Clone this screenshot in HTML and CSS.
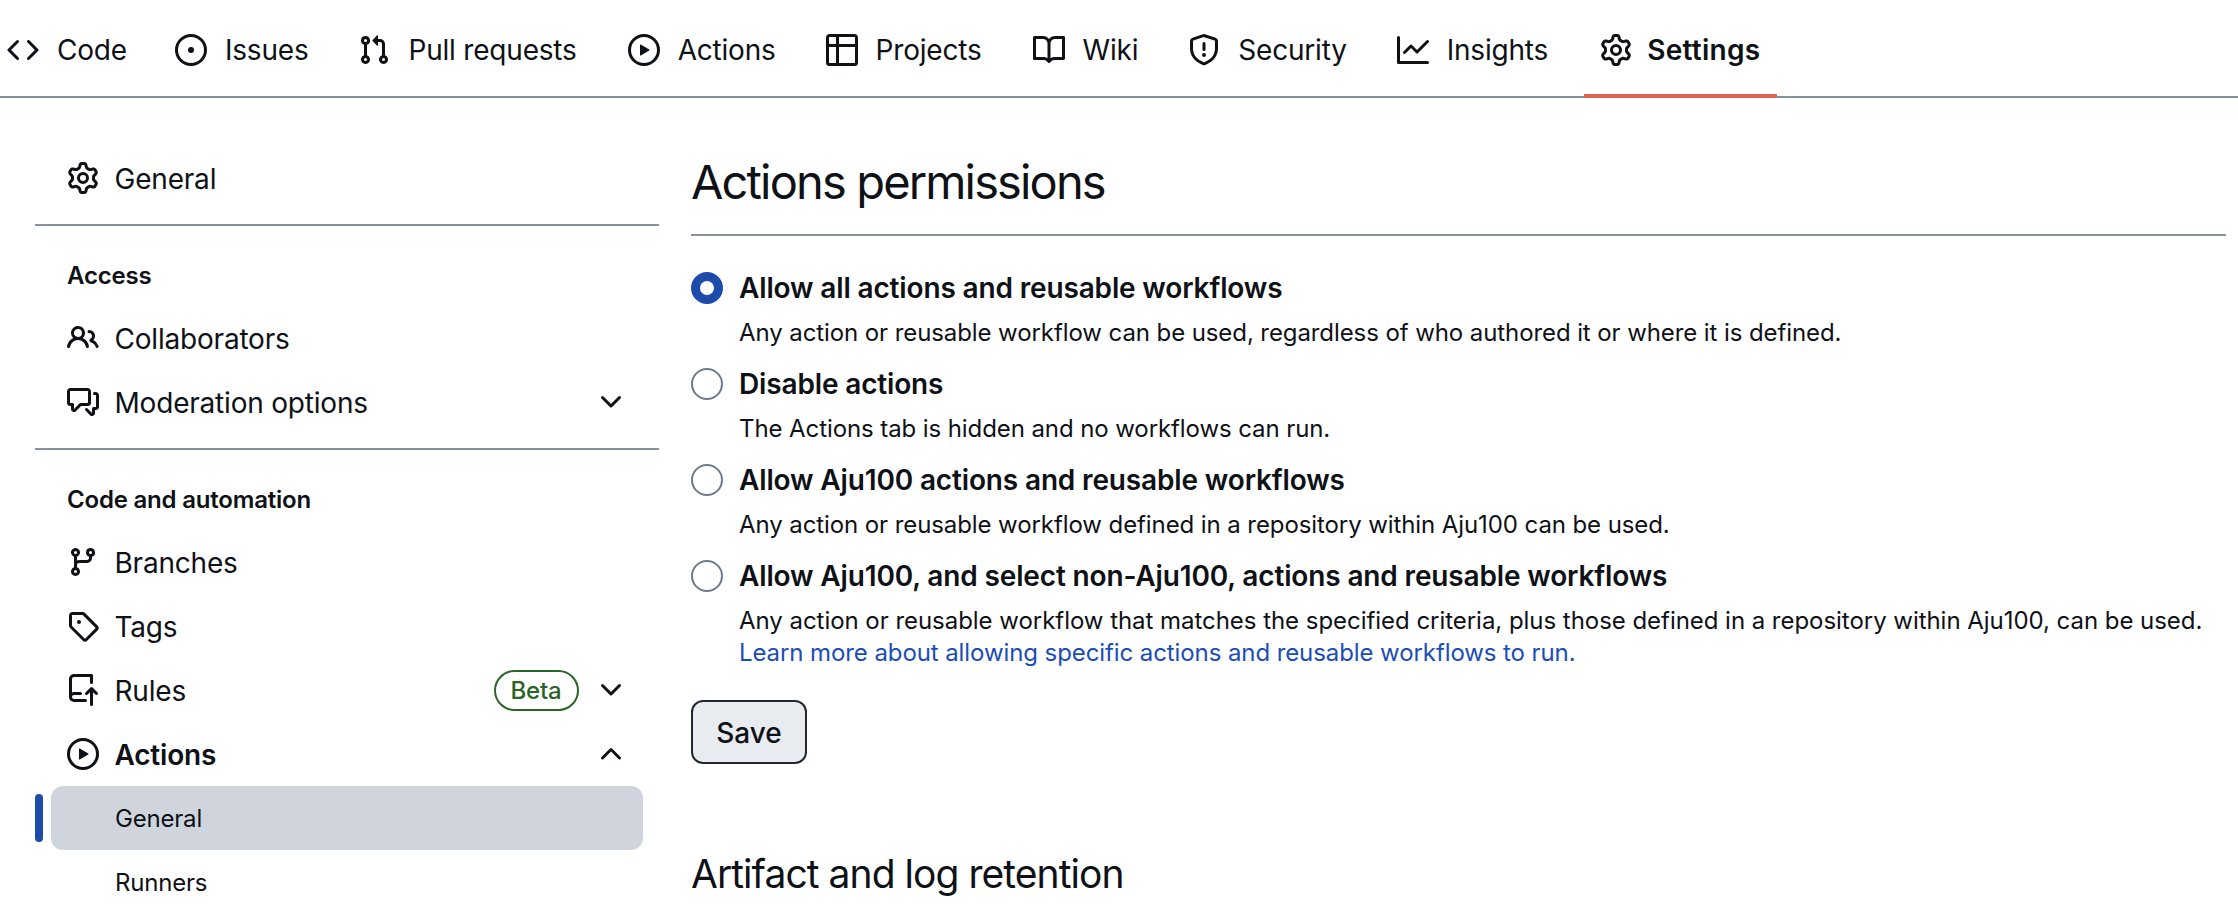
FILE: index.html
```html
<!DOCTYPE html>
<html>
<head>
    <title>Actions permissions</title>
    <link rel="stylesheet" href="styles.css">
</head>
<body>
    <svg class="sprite" xmlns="http://www.w3.org/2000/svg">
        <symbol id="i-code" viewBox="0 0 16 16"><path d="m11.28 3.22 4.25 4.25a.75.75 0 0 1 0 1.06l-4.25 4.25a.749.749 0 0 1-1.275-.326.749.749 0 0 1 .215-.734L13.94 8l-3.72-3.72a.749.749 0 0 1 .326-1.275.749.749 0 0 1 .734.215Zm-6.56 0a.751.751 0 0 1 1.042.018.751.751 0 0 1 .018 1.042L2.06 8l3.72 3.72a.749.749 0 0 1-.326 1.275.749.749 0 0 1-.734-.215L.47 8.53a.75.75 0 0 1 0-1.06Z"/></symbol>
        <symbol id="i-issue" viewBox="0 0 16 16"><path d="M8 9.5a1.5 1.5 0 1 0 0-3 1.5 1.5 0 0 0 0 3Z"/><path d="M8 0a8 8 0 1 1 0 16A8 8 0 0 1 8 0ZM1.5 8a6.5 6.5 0 1 0 13 0 6.5 6.5 0 0 0-13 0Z"/></symbol>
        <symbol id="i-pull" viewBox="0 0 16 16"><path d="M1.5 3.25a2.25 2.25 0 1 1 3 2.122v5.256a2.251 2.251 0 1 1-1.5 0V5.372A2.25 2.25 0 0 1 1.5 3.25Zm5.677-.177L9.573.677A.25.25 0 0 1 10 .854V2.5h1A2.5 2.5 0 0 1 13.5 5v5.628a2.251 2.251 0 1 1-1.5 0V5a1 1 0 0 0-1-1h-1v1.646a.25.25 0 0 1-.427.177L7.177 3.427a.25.25 0 0 1 0-.354ZM3.75 2.5a.75.75 0 1 0 0 1.5.75.75 0 0 0 0-1.5Zm0 9.5a.75.75 0 1 0 0 1.5.75.75 0 0 0 0-1.5Zm8.25.75a.75.75 0 1 0 1.5 0 .75.75 0 0 0-1.5 0Z"/></symbol>
        <symbol id="i-play" viewBox="0 0 16 16"><path d="M8 0a8 8 0 1 1 0 16A8 8 0 0 1 8 0ZM1.5 8a6.5 6.5 0 1 0 13 0 6.5 6.5 0 0 0-13 0Zm4.879-2.773 4.264 2.559a.25.25 0 0 1 0 .428l-4.264 2.559A.25.25 0 0 1 6 10.559V5.442a.25.25 0 0 1 .379-.215Z"/></symbol>
        <symbol id="i-table" viewBox="0 0 16 16"><path d="M0 1.75C0 .784.784 0 1.75 0h12.5C15.216 0 16 .784 16 1.75v12.5A1.75 1.75 0 0 1 14.25 16H1.75A1.75 1.75 0 0 1 0 14.25ZM6.5 6.5v8h7.75a.25.25 0 0 0 .25-.25V6.5Zm8-1.5V1.75a.25.25 0 0 0-.25-.25H6.5V5Zm-13 1.5v7.75c0 .138.112.25.25.25H5v-8ZM5 5V1.5H1.75a.25.25 0 0 0-.25.25V5Z"/></symbol>
        <symbol id="i-book" viewBox="0 0 16 16"><path d="M0 1.75A.75.75 0 0 1 .75 1h4.253c1.227 0 2.317.59 3 1.501A3.743 3.743 0 0 1 11.006 1h4.245a.75.75 0 0 1 .75.75v10.5a.75.75 0 0 1-.75.75h-4.507a2.25 2.25 0 0 0-1.591.659l-.622.621a.75.75 0 0 1-1.06 0l-.622-.621A2.25 2.25 0 0 0 5.258 13H.75a.75.75 0 0 1-.75-.75Zm7.251 10.324.004-5.073-.002-2.253A2.25 2.25 0 0 0 5.003 2.5H1.5v9h3.757a3.75 3.75 0 0 1 1.994.574ZM8.755 4.75l-.004 7.322a3.752 3.752 0 0 1 1.992-.572H14.5v-9h-3.495a2.25 2.25 0 0 0-2.25 2.25Z"/></symbol>
        <symbol id="i-shield" viewBox="0 0 16 16"><path d="M7.467.133a1.748 1.748 0 0 1 1.066 0l5.25 1.68A1.75 1.75 0 0 1 15 3.48V7c0 1.566-.32 3.182-1.303 4.682-.983 1.498-2.585 2.813-5.032 3.855a1.697 1.697 0 0 1-1.33 0c-2.447-1.042-4.049-2.357-5.032-3.855C1.32 10.182 1 8.566 1 7V3.48a1.75 1.75 0 0 1 1.217-1.667Zm.61 1.429a.25.25 0 0 0-.153 0l-5.25 1.68a.25.25 0 0 0-.174.238V7c0 1.358.275 2.666 1.057 3.86.784 1.194 2.121 2.34 4.366 3.297a.196.196 0 0 0 .154 0c2.245-.956 3.582-2.104 4.366-3.298C13.225 9.666 13.5 8.36 13.5 7V3.48a.251.251 0 0 0-.174-.237l-5.25-1.68ZM8.75 4.75v3a.75.75 0 0 1-1.5 0v-3a.75.75 0 0 1 1.5 0ZM9 10.5a1 1 0 1 1-2 0 1 1 0 0 1 2 0Z"/></symbol>
        <symbol id="i-graph" viewBox="0 0 16 16"><path d="M1.5 1.75V13.5h13.75a.75.75 0 0 1 0 1.5H.75a.75.75 0 0 1-.75-.75V1.75a.75.75 0 0 1 1.5 0Zm14.28 2.53-5.25 5.25a.75.75 0 0 1-1.06 0L7 7.06 4.28 9.78a.751.751 0 0 1-1.042-.018.751.751 0 0 1-.018-1.042l3.25-3.25a.75.75 0 0 1 1.06 0L10 7.94l4.72-4.72a.751.751 0 0 1 1.042.018.751.751 0 0 1 .018 1.042Z"/></symbol>
        <symbol id="i-gear" viewBox="0 0 16 16"><path d="M8 0a8.2 8.2 0 0 1 .701.031C9.444.095 9.99.645 10.16 1.29l.288 1.107c.018.066.079.158.212.224.231.114.454.243.668.386.123.082.233.09.299.071l1.103-.303c.644-.176 1.392.021 1.82.63.27.385.506.792.704 1.218.315.675.111 1.422-.364 1.891l-.814.806c-.049.048-.098.147-.088.294.016.257.016.515 0 .772-.01.147.038.246.088.294l.814.806c.475.469.679 1.216.364 1.891a7.977 7.977 0 0 1-.704 1.217c-.428.61-1.176.807-1.82.63l-1.102-.302c-.067-.019-.177-.011-.3.071a5.909 5.909 0 0 1-.668.386c-.133.066-.194.158-.211.224l-.29 1.106c-.168.646-.715 1.196-1.458 1.26a8.006 8.006 0 0 1-1.402 0c-.743-.064-1.289-.614-1.458-1.26l-.289-1.106c-.018-.066-.079-.158-.212-.224a5.738 5.738 0 0 1-.668-.386c-.123-.082-.233-.09-.299-.071l-1.103.303c-.644.176-1.392-.021-1.82-.63a8.12 8.12 0 0 1-.704-1.218c-.315-.675-.111-1.422.363-1.891l.815-.806c.05-.048.098-.147.088-.294a6.214 6.214 0 0 1 0-.772c.01-.147-.038-.246-.088-.294l-.815-.806C.635 6.045.431 5.298.746 4.623a7.92 7.92 0 0 1 .704-1.217c.428-.61 1.176-.807 1.82-.63l1.102.302c.067.019.177.011.3-.071.214-.143.437-.272.668-.386.133-.066.194-.158.211-.224l.29-1.106C6.009.645 6.556.095 7.299.03 7.53.01 7.764 0 8 0Zm-.571 1.525c-.036.003-.108.036-.137.146l-.289 1.105c-.147.561-.549.967-.998 1.189-.173.086-.34.183-.5.29-.417.278-.97.423-1.529.27l-1.103-.303c-.109-.03-.175.016-.195.045-.22.312-.412.644-.573.99-.014.031-.021.11.059.19l.815.806c.411.406.562.957.53 1.456a4.709 4.709 0 0 0 0 .582c.032.499-.119 1.05-.53 1.456l-.815.806c-.081.08-.073.159-.059.19.162.346.353.677.573.989.02.03.085.076.195.046l1.102-.303c.56-.153 1.113-.008 1.53.27.161.107.328.204.501.29.447.222.85.629.997 1.189l.289 1.105c.029.109.101.143.137.146a6.6 6.6 0 0 0 1.142 0c.036-.003.108-.036.137-.146l.289-1.105c.147-.561.549-.967.998-1.189.173-.086.34-.183.5-.29.417-.278.97-.423 1.529-.27l1.103.303c.109.029.175-.016.195-.045.22-.313.411-.644.573-.99.014-.031.021-.11-.059-.19l-.815-.806c-.411-.406-.562-.957-.53-1.456a4.709 4.709 0 0 0 0-.582c-.032-.499.119-1.05.53-1.456l.815-.806c.081-.08.073-.159.059-.19a6.464 6.464 0 0 0-.573-.989c-.02-.03-.085-.076-.195-.046l-1.102.303c-.56.153-1.113.008-1.53-.27a4.44 4.44 0 0 0-.501-.29c-.447-.222-.85-.629-.997-1.189l-.289-1.105c-.029-.11-.101-.143-.137-.146a6.6 6.6 0 0 0-1.142 0ZM11 8a3 3 0 1 1-6 0 3 3 0 0 1 6 0ZM9.5 8a1.5 1.5 0 1 0-3.001.001A1.5 1.5 0 0 0 9.5 8Z"/></symbol>
        <symbol id="i-people" viewBox="0 0 16 16"><path d="M2 5.5a3.5 3.5 0 1 1 5.898 2.549 5.508 5.508 0 0 1 3.034 4.084.75.75 0 1 1-1.482.235 4 4 0 0 0-7.9 0 .75.75 0 0 1-1.482-.236A5.507 5.507 0 0 1 3.102 8.05 3.493 3.493 0 0 1 2 5.5ZM11 4a3.001 3.001 0 0 1 2.22 5.018 5.01 5.01 0 0 1 2.56 3.012.749.749 0 0 1-.885.954.752.752 0 0 1-.549-.514 3.507 3.507 0 0 0-2.522-2.372.75.75 0 0 1-.574-.73v-.352a.75.75 0 0 1 .416-.672A1.5 1.5 0 0 0 11 5.5.75.75 0 0 1 11 4Zm-5.5-.5a2 2 0 1 0-.001 3.999A2 2 0 0 0 5.5 3.5Z"/></symbol>
        <symbol id="i-discussion" viewBox="0 0 16 16"><path d="M1.75 1h8.5c.966 0 1.75.784 1.75 1.75v5.5A1.75 1.75 0 0 1 10.25 10H7.061l-2.574 2.573A1.458 1.458 0 0 1 2 11.543V10h-.25A1.75 1.75 0 0 1 0 8.25v-5.5C0 1.784.784 1 1.75 1ZM1.5 2.75v5.5c0 .138.112.25.25.25h1a.75.75 0 0 1 .75.75v2.19l2.72-2.72a.749.749 0 0 1 .53-.22h3.5a.25.25 0 0 0 .25-.25v-5.5a.25.25 0 0 0-.25-.25h-8.5a.25.25 0 0 0-.25.25Zm13 2a.25.25 0 0 0-.25-.25h-.5a.75.75 0 0 1 0-1.5h.5c.966 0 1.75.784 1.75 1.75v5.5A1.75 1.75 0 0 1 14.25 12H14v1.543a1.458 1.458 0 0 1-2.487 1.03L9.22 12.28a.749.749 0 0 1 .326-1.275.749.749 0 0 1 .734.215l2.22 2.22v-2.19a.75.75 0 0 1 .75-.75h1a.25.25 0 0 0 .25-.25Z"/></symbol>
        <symbol id="i-branch" viewBox="0 0 16 16"><path d="M9.5 3.25a2.25 2.25 0 1 1 3 2.122V6A2.5 2.5 0 0 1 10 8.5H6a1 1 0 0 0-1 1v1.128a2.251 2.251 0 1 1-1.5 0V5.372a2.25 2.25 0 1 1 1.5 0v1.836A2.493 2.493 0 0 1 6 7h4a1 1 0 0 0 1-1v-.628A2.25 2.25 0 0 1 9.5 3.25Zm-6 0a.75.75 0 1 0 1.5 0 .75.75 0 0 0-1.5 0Zm8.25-.75a.75.75 0 1 0 0 1.5.75.75 0 0 0 0-1.5ZM4.25 12a.75.75 0 1 0 0 1.5.75.75 0 0 0 0-1.5Z"/></symbol>
        <symbol id="i-tag" viewBox="0 0 16 16"><path d="M1 7.775V2.75C1 1.784 1.784 1 2.75 1h5.025c.464 0 .91.184 1.238.513l6.25 6.25a1.75 1.75 0 0 1 0 2.474l-5.026 5.026a1.75 1.75 0 0 1-2.474 0l-6.25-6.25A1.75 1.75 0 0 1 1 7.775Zm1.5 0c0 .066.026.13.073.177l6.25 6.25a.25.25 0 0 0 .354 0l5.025-5.025a.25.25 0 0 0 0-.354l-6.25-6.25a.25.25 0 0 0-.177-.073H2.75a.25.25 0 0 0-.25.25ZM6 5a1 1 0 1 1 0 2 1 1 0 0 1 0-2Z"/></symbol>
        <symbol id="i-push" viewBox="0 0 16 16"><path d="M1 2.5A2.5 2.5 0 0 1 3.5 0h8.75a.75.75 0 0 1 .75.75v3.5a.75.75 0 0 1-1.5 0V1.5h-8a1 1 0 0 0-1 1v6.708A2.493 2.493 0 0 1 3.5 9h3.25a.75.75 0 0 1 0 1.5H3.5a1 1 0 0 0 0 2h5.75a.75.75 0 0 1 0 1.5H3.5A2.5 2.5 0 0 1 1 11.5Zm13.23 7.79h-.001l-1.224-1.224v6.184a.75.75 0 0 1-1.5 0V9.066L10.28 10.29a.75.75 0 0 1-1.06-1.061l2.505-2.504a.75.75 0 0 1 1.06 0L15.29 9.23a.751.751 0 0 1-.018 1.042.751.751 0 0 1-1.042.018Z"/></symbol>
        <symbol id="i-down" viewBox="0 0 16 16"><path d="M12.78 5.22a.749.749 0 0 1 0 1.06l-4.25 4.25a.749.749 0 0 1-1.06 0L3.22 6.28a.749.749 0 1 1 1.06-1.06L8 8.939l3.72-3.719a.749.749 0 0 1 1.06 0Z"/></symbol>
        <symbol id="i-up" viewBox="0 0 16 16"><path d="M3.22 10.53a.749.749 0 0 1 0-1.06l4.25-4.25a.749.749 0 0 1 1.06 0l4.25 4.25a.749.749 0 1 1-1.06 1.06L8 6.811 4.28 10.53a.749.749 0 0 1-1.06 0Z"/></symbol>
    </svg>

    <nav class="tabs">
        <a class="tab"><svg class="icon"><use href="#i-code"/></svg><span>Code</span></a>
        <a class="tab"><svg class="icon"><use href="#i-issue"/></svg><span>Issues</span></a>
        <a class="tab"><svg class="icon"><use href="#i-pull"/></svg><span>Pull requests</span></a>
        <a class="tab"><svg class="icon"><use href="#i-play"/></svg><span>Actions</span></a>
        <a class="tab"><svg class="icon"><use href="#i-table"/></svg><span>Projects</span></a>
        <a class="tab"><svg class="icon"><use href="#i-book"/></svg><span>Wiki</span></a>
        <a class="tab"><svg class="icon"><use href="#i-shield"/></svg><span>Security</span></a>
        <a class="tab"><svg class="icon"><use href="#i-graph"/></svg><span>Insights</span></a>
        <a class="tab tab-selected"><svg class="icon"><use href="#i-gear"/></svg><span>Settings</span></a>
    </nav>

    <div class="layout">
        <aside class="sidebar">
            <a class="side-item"><svg class="icon"><use href="#i-gear"/></svg><span class="side-label">General</span></a>
            <div class="side-divider"></div>

            <h3 class="side-heading">Access</h3>
            <a class="side-item"><svg class="icon"><use href="#i-people"/></svg><span class="side-label">Collaborators</span></a>
            <a class="side-item"><svg class="icon"><use href="#i-discussion"/></svg><span class="side-label">Moderation options</span><svg class="chevron"><use href="#i-down"/></svg></a>
            <div class="side-divider"></div>

            <h3 class="side-heading">Code and automation</h3>
            <a class="side-item"><svg class="icon"><use href="#i-branch"/></svg><span class="side-label">Branches</span></a>
            <a class="side-item"><svg class="icon"><use href="#i-tag"/></svg><span class="side-label">Tags</span></a>
            <a class="side-item"><svg class="icon"><use href="#i-push"/></svg><span class="side-label">Rules</span><span class="beta">Beta</span><svg class="chevron"><use href="#i-down"/></svg></a>
            <a class="side-item side-open"><svg class="icon"><use href="#i-play"/></svg><span class="side-label">Actions</span><svg class="chevron"><use href="#i-up"/></svg></a>
            <a class="sub-item sub-current">General</a>
            <a class="sub-item">Runners</a>
        </aside>

        <main class="content">
            <h2 class="section-title">Actions permissions</h2>

            <div class="option">
                <span class="radio radio-on"></span>
                <div class="option-body">
                    <div class="option-label">Allow all actions and reusable workflows</div>
                    <p class="option-note">Any action or reusable workflow can be used, regardless of who authored it or where it is defined.</p>
                </div>
            </div>
            <div class="option">
                <span class="radio"></span>
                <div class="option-body">
                    <div class="option-label">Disable actions</div>
                    <p class="option-note">The Actions tab is hidden and no workflows can run.</p>
                </div>
            </div>
            <div class="option">
                <span class="radio"></span>
                <div class="option-body">
                    <div class="option-label">Allow Aju100 actions and reusable workflows</div>
                    <p class="option-note">Any action or reusable workflow defined in a repository within Aju100 can be used.</p>
                </div>
            </div>
            <div class="option">
                <span class="radio"></span>
                <div class="option-body">
                    <div class="option-label">Allow Aju100, and select non-Aju100, actions and reusable workflows</div>
                    <p class="option-note"><span class="note-long">Any action or reusable workflow that matches the specified criteria, plus those defined in a repository within Aju100, can be used.</span><br><a class="link">Learn more about allowing specific actions and reusable workflows to run.</a></p>
                </div>
            </div>

            <button class="save">Save</button>

            <h2 class="section-title section-plain">Artifact and log retention</h2>
        </main>
    </div>
</body>
</html>
```

FILE: styles.css
```css
* {
    box-sizing: border-box;
}
html, body {
    height: 904px;
    overflow: hidden;
}
body {
    margin: 0;
    background-color: #fff;
    color: #0e1116;
    font-family: Inter, "Noto Sans", sans-serif;
    font-size: 28px;
    letter-spacing: -0.2px;
}
.sprite {
    display: none;
}
.icon {
    width: 32px;
    height: 32px;
    flex: none;
    fill: #0e1116;
}

/* top tabs */
.tabs {
    display: flex;
    gap: 18px;
    height: 98px;
    border-bottom: 2px solid #88929d;
}
.tab {
    display: flex;
    align-items: center;
    gap: 18px;
    height: 98px;
    padding: 6px 16px 0;
    border-bottom: 4px solid transparent;
    white-space: nowrap;
}
.tab:first-child {
    margin-left: -9px;
    margin-right: -2px;
}
.tab:nth-child(3) {
    margin-right: 1px;
}
.tab:nth-child(5) {
    margin-right: 1px;
}
.tab-selected {
    margin-left: 2px;
    gap: 15px;
    font-weight: 600;
    letter-spacing: 0.3px;
    border-bottom-color: #e0634f;
    border-radius: 0 0 2px 2px;
}

/* sidebar */
.layout {
    display: flex;
    padding: 48px 12px 0 35px;
}
.sidebar {
    width: 624px;
    flex: none;
}
.side-item {
    display: flex;
    align-items: center;
    gap: 15.5px;
    height: 64px;
    padding: 0 32px;
}
.side-label {
    flex: 1;
    padding-top: 2px;
}
.side-open {
    font-weight: 600;
}
.side-divider {
    height: 2px;
    margin-top: 14px;
    background-color: #88929d;
}
.side-heading {
    margin: 36px 32px 16px;
    font-size: 24px;
    line-height: 28px;
    font-weight: 600;
}
.chevron {
    width: 32px;
    height: 32px;
    flex: none;
    fill: #0e1116;
}
.beta {
    height: 41px;
    margin-right: 1px;
    padding: 0 15px;
    border: 2px solid #2a6427;
    border-radius: 41px;
    color: #2a6427;
    font-size: 24px;
    line-height: 37px;
    font-weight: 500;
}
.sub-item {
    position: relative;
    display: block;
    height: 64px;
    margin: 0 16px;
    padding-left: 64px;
    border-radius: 12px;
    font-size: 24px;
    line-height: 66px;
}
.sub-current {
    background-color: #d0d5dd;
}
.sub-current::before {
    content: "";
    position: absolute;
    left: -16px;
    top: 8px;
    width: 8px;
    height: 48px;
    border-radius: 4px;
    background-color: #1d4bab;
}

/* main column */
.content {
    flex: 1;
    margin-left: 32px;
}
.section-title {
    margin: 0 0 32px;
    padding-bottom: 16px;
    border-bottom: 2px solid #88929d;
    font-size: 47px;
    line-height: 72px;
    font-weight: 400;
    letter-spacing: -1.85px;
}
.section-plain {
    border-bottom: none;
    margin: 81px 0 0;
    padding-bottom: 0;
    font-size: 39px;
    line-height: 58px;
    letter-spacing: -0.95px;
}
.option {
    display: flex;
    gap: 16px;
    margin-bottom: 15px;
}
.radio {
    width: 32px;
    height: 32px;
    flex: none;
    margin-top: 4px;
    border: 2px solid #6f7a86;
    border-radius: 50%;
    background-color: #fff;
}
.radio-on {
    border: 9px solid #1d4bab;
}
.option-label {
    font-weight: 600;
    line-height: 40px;
    letter-spacing: -0.15px;
}
.option-note {
    margin: 9px 0 0;
    font-size: 24px;
    line-height: 32px;
    letter-spacing: -0.09px;
}
.note-long {
    letter-spacing: -0.04px;
}
.link {
    color: #1a4db5;
}
.save {
    display: block;
    width: 116px;
    height: 64px;
    margin-top: 31px;
    padding-top: 2px;
    border: 2px solid #25292e;
    border-radius: 12px;
    background-color: #e8ebf0;
    color: #0e1116;
    font-family: inherit;
    font-size: 28px;
    font-weight: 500;
}
```
